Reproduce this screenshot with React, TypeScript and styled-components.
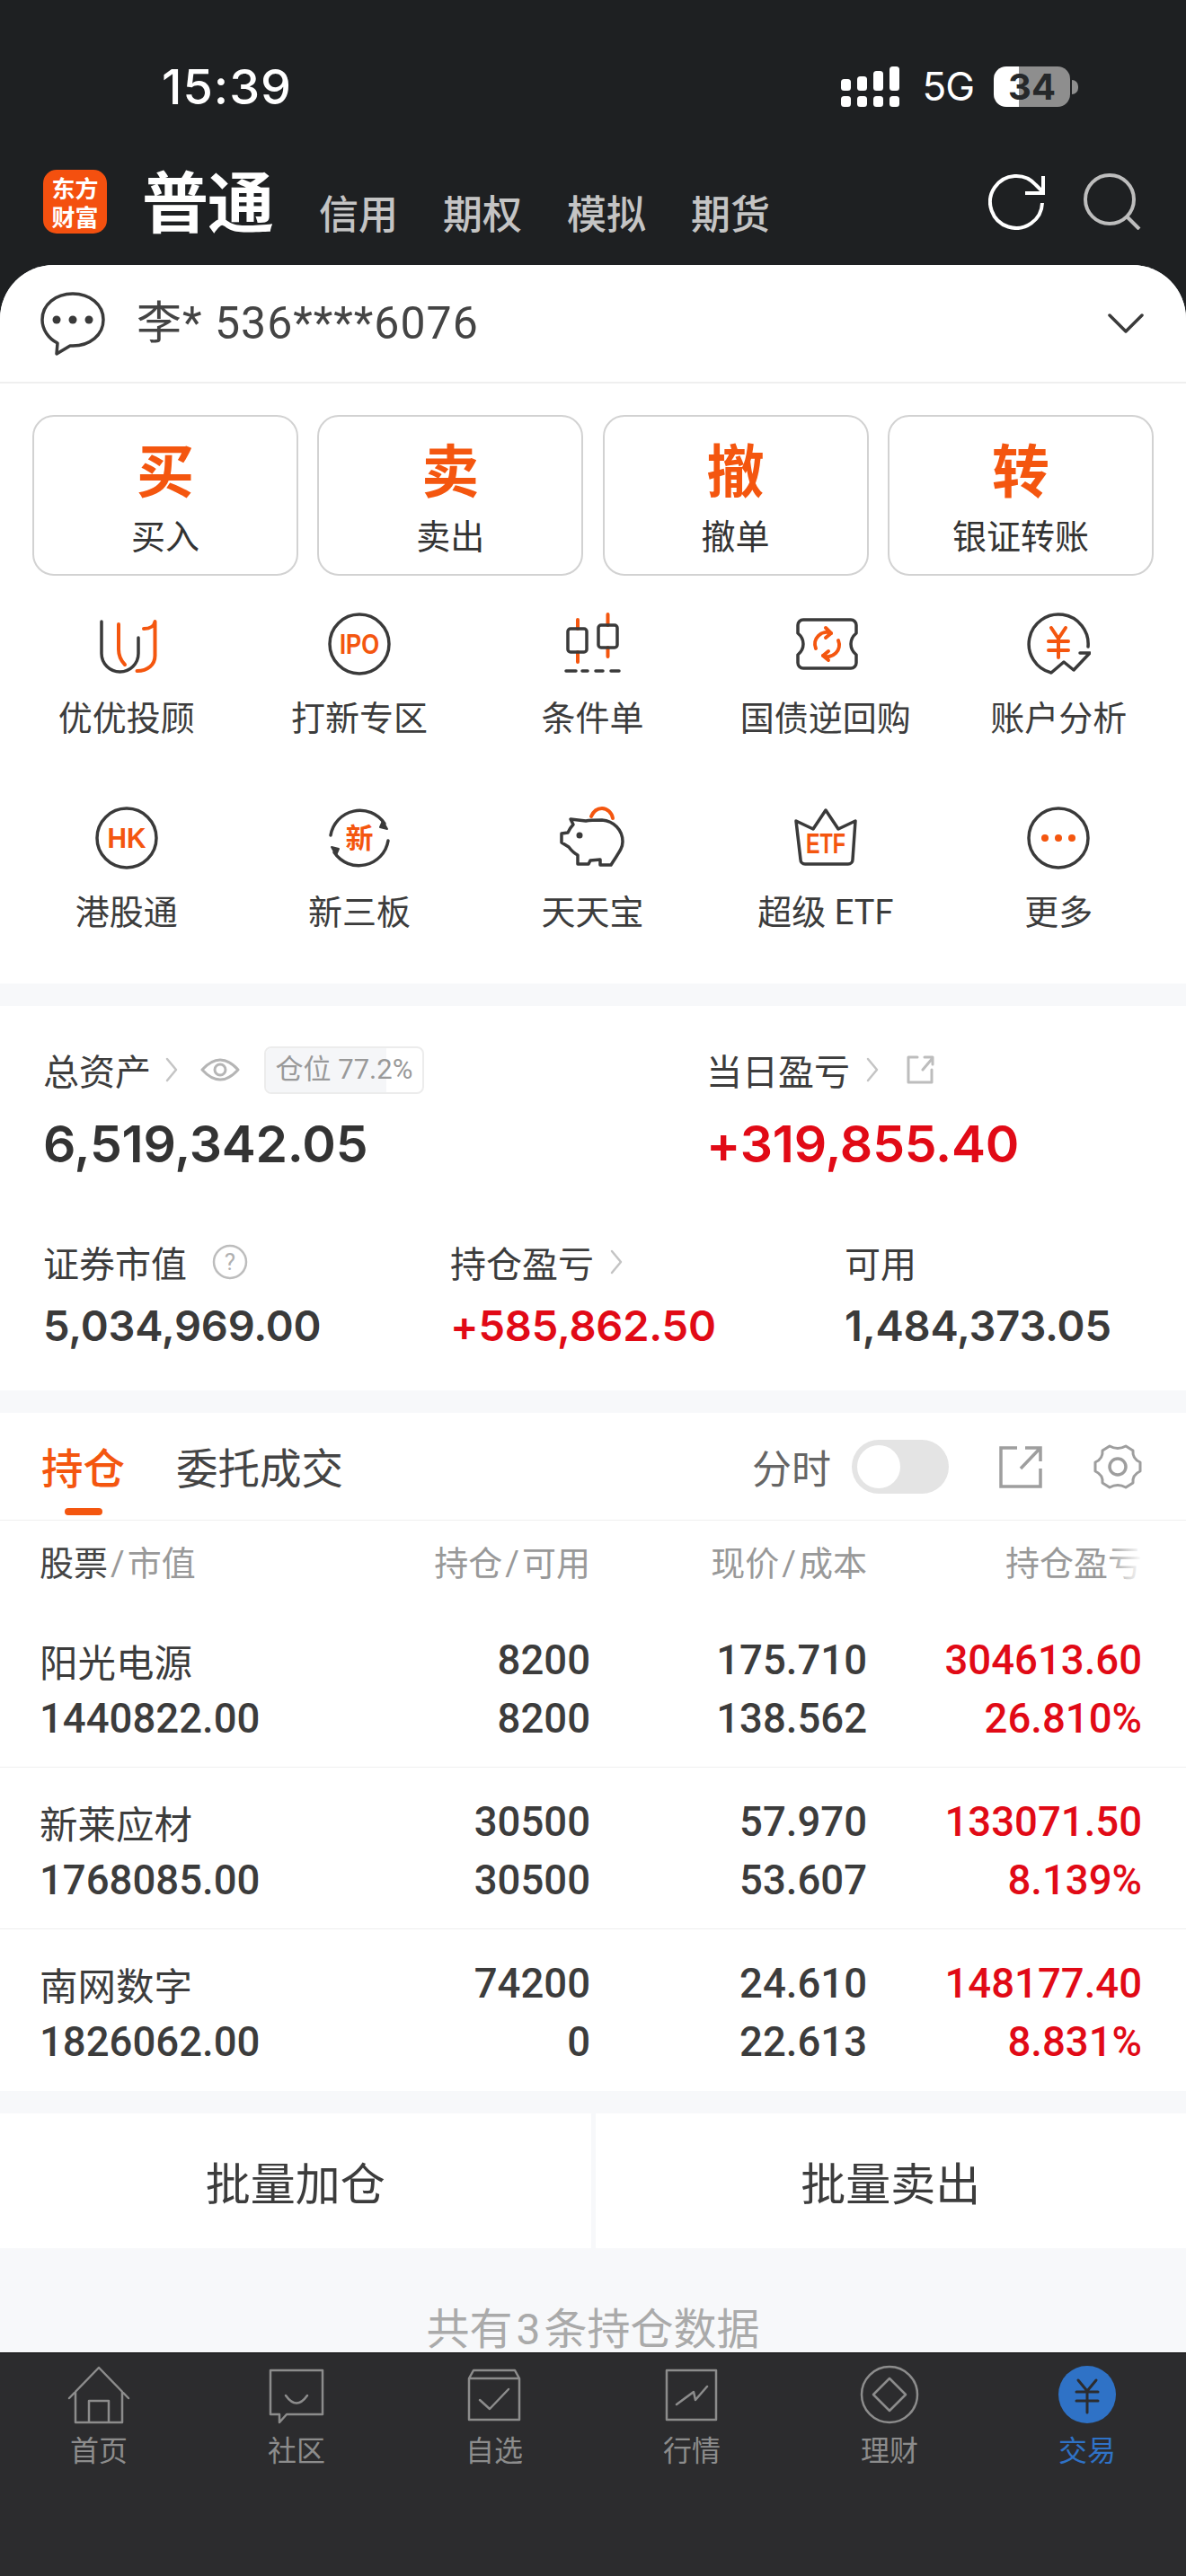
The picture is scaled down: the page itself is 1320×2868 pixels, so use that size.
import React from "react";
import styled, { createGlobalStyle } from "styled-components";

const CJK = `Roboto, "Noto Sans CJK SC", sans-serif`;
const ORANGE = "#f4560f";
const DARK = "#3a3a3a";
const RED = "#e10a16";

const Global = createGlobalStyle`
  html, body { margin: 0; padding: 0; background: #1e2022; }
  * { box-sizing: border-box; }
`;

const Page = styled.div`
  width: 1320px; height: 2868px; display: flex; flex-direction: column;
  background: #1e2022; overflow: hidden; font-family: ${CJK}; color: #444;
`;
const Top = styled.header`height: 295px; flex: none; display: flex; flex-direction: column;`;
const StatusBar = styled.div`
  height: 189px; padding: 74px 120px 0 180px; display: flex; justify-content: space-between; align-items: flex-start; color: #fff;
`;
const Time = styled.div`font: 500 54px/46px Inter, Roboto, sans-serif; letter-spacing: 1px;`;
const StatusRight = styled.div`display: flex; align-items: center; height: 45px;`;
const FiveG = styled.span`font: 400 44px/45px Inter, Roboto, sans-serif; margin: 0 22px 0 24px; letter-spacing: -1px;`;
const Battery = styled.div`
  width: 85px; height: 45px; border-radius: 14px; background: linear-gradient(90deg, #fff 33%, #8e8e8e 33%);
  text-align: center; font: 700 40px/45px Inter, Roboto, sans-serif; color: #26282a;
`;
const BatteryNub = styled.div`width: 7px; height: 16px; border-radius: 0 8px 8px 0; background: #8e8e8e; margin-left: 2px;`;

const Nav = styled.nav`height: 106px; display: flex; align-items: flex-start; padding-left: 48px;`;
const Logo = styled.div`
  width: 71px; height: 71px; border-radius: 15px; background: #f4500f; color: #fff; flex: none;
  display: flex; align-items: center; justify-content: center; text-align: center;
  font: 700 26px/32px "Noto Sans CJK SC", sans-serif;
`;
const MainTab = styled.div`
  margin-left: 39px; width: 197px; font: 700 74px/74px "Noto Sans CJK SC", sans-serif; color: #fff; letter-spacing: -1px; margin-top: -5px;
`;
const SubTab = styled.div`
  width: 138px; font: 500 44px/44px "Noto Sans CJK SC", sans-serif; color: #c4c4c4; margin-top: 25px;
`;
const NavRight = styled.div`margin-left: auto; display: flex; gap: 42px; padding-right: 50px; margin-top: 3px;`;

const Content = styled.main`
  flex: 1; min-height: 0; overflow: hidden; background: #f7f8fa; border-radius: 60px 60px 0 0;
`;
const Account = styled.div`
  height: 132px; background: #fff; border-bottom: 2px solid #efefef; display: flex; align-items: center; padding: 0 46px 0 45px;
`;
const AccountText = styled.div`margin-left: 35px; font: 400 50px/60px Roboto, "Noto Sans CJK SC", sans-serif; color: #444; letter-spacing: 1px; flex: 1;`;

const Shortcuts = styled.section`background: #fff; padding: 35px 11px 54px; margin-bottom: 25px;`;
const Actions = styled.div`display: grid; grid-template-columns: repeat(4, 296px); gap: 21.3px; padding: 0 25px; margin-bottom: 40px;`;
const ActionButton = styled.div`
  height: 179px; border: 2px solid #d2d2d2; border-radius: 24px; display: flex; flex-direction: column; align-items: center;
  padding-top: 16px;
`;
const ActionBig = styled.div`font: 700 64px/80px "Noto Sans CJK SC", sans-serif; color: ${ORANGE};`;
const ActionLabel = styled.div`font: 400 38px/50px "Noto Sans CJK SC", sans-serif; color: #333; margin-top: 10px;`;
const Grid = styled.div`display: grid; grid-template-columns: repeat(5, 259.4px); row-gap: 72px;`;
const GridItem = styled.div`display: flex; flex-direction: column; align-items: center;`;
const GridLabel = styled.div`font: 400 38px/50px Roboto, "Noto Sans CJK SC", sans-serif; color: #3c3c3c; margin-top: 22px;`;
const Ico = styled.svg`display: block; flex: none;`;

const Stats = styled.section`background: #fff; padding: 46px 0 44px 48px; margin-bottom: 25px;`;
const StatRow = styled.div<{ $cols: string; $gap: number }>`
  display: grid; grid-template-columns: ${(p) => p.$cols}; margin-bottom: ${(p) => p.$gap}px;
`;
const StatLabel = styled.div`height: 50px; display: flex; align-items: center; font: 400 40px/50px "Noto Sans CJK SC", sans-serif; color: #3c3c3c;`;
const Gap = styled.span<{ $w: number }>`width: ${(p) => p.$w}px; flex: none;`;
const BigValue = styled.div<{ $red?: boolean }>`
  margin-top: 23px; font: 600 57px/70px Inter, Roboto, sans-serif; letter-spacing: -0.2px; color: ${(p) => (p.$red ? RED : "#333")};
`;
const SmallValue = styled.div<{ $red?: boolean }>`
  margin-top: 18px; font: 600 47px/56px Inter, Roboto, sans-serif; letter-spacing: -0.2px; color: ${(p) => (p.$red ? RED : "#3a3a3a")};
`;
const Badge = styled.div`
  position: relative; width: 178px; height: 53px; border: 2px solid #ececec; border-radius: 8px; margin-left: 27px; overflow: hidden;
  display: flex; align-items: center; justify-content: center; font: 400 31px/50px Roboto, "Noto Sans CJK SC", sans-serif; color: #999; white-space: nowrap;
`;
const BadgeFill = styled.div`position: absolute; left: 0; top: 0; bottom: 0; background: #f5f6f8;`;
const BadgeText = styled.span`position: relative;`;

const Holdings = styled.section`background: #fff; margin-bottom: 25px;`;
const TabsRow = styled.div`height: 120px; border-bottom: 1px solid #efefef; display: flex; align-items: center; padding-left: 46px;`;
const HoldTab = styled.div<{ $active?: boolean }>`
  position: relative; margin-right: 57px; font: ${(p) => (p.$active ? 500 : 400)} 46.5px/60px "Noto Sans CJK SC", sans-serif;
  color: ${(p) => (p.$active ? ORANGE : "#444")}; margin-top: -2px;
`;
const Underline = styled.div`position: absolute; left: 26px; bottom: -25px; width: 42px; height: 8px; border-radius: 4px; background: ${ORANGE};`;
const TabsRight = styled.div`margin-left: auto; display: flex; align-items: center; padding-right: 48px;`;
const Fenshi = styled.span`font: 400 44px/50px "Noto Sans CJK SC", sans-serif; color: #666; margin-right: 23px;`;
const Toggle = styled.div`width: 108px; height: 60px; border-radius: 30px; background: #e4e4e4; padding: 6px; margin-right: 56px;`;
const Knob = styled.div`width: 48px; height: 48px; border-radius: 50%; background: #fff;`;

const COLS = "244px 369px 308px 306px";
const HeadRow = styled.div`
  position: relative; height: 95px; display: grid; grid-template-columns: ${COLS}; padding: 0 0 5px 44px; align-items: center;
  font: 400 38px/50px "Noto Sans CJK SC", sans-serif; color: #999;
`;
const HeadCell = styled.div<{ $right?: boolean }>`text-align: ${(p) => (p.$right ? "right" : "left")}; white-space: nowrap;`;
const HeadStrong = styled.span`color: #444;`;
const Slash = styled.span`font-family: Roboto, sans-serif; line-height: 1; margin: 0 3px;`;
const Fade = styled.div`position: absolute; left: 1232px; top: 18px; width: 46px; height: 60px; background: linear-gradient(90deg, rgba(255,255,255,0), #fff 85%);`;
const Row = styled.div`
  height: 180px; display: grid; grid-template-columns: ${COLS}; padding: 28px 0 0 44px; grid-auto-rows: 65px; align-items: center;
  &:not(:last-child) { border-bottom: 1px solid #efefef; }
`;
const Name = styled.div`font: 400 42.5px/64px "Noto Sans CJK SC", sans-serif; color: #3c3c3c; white-space: nowrap;`;
const Num = styled.div<{ $red?: boolean; $left?: boolean }>`
  font: 500 45.5px/64px Roboto, sans-serif; white-space: nowrap; text-align: ${(p) => (p.$left ? "left" : "right")};
  color: ${(p) => (p.$red ? RED : "#3c3c3c")};
`;

const Bulk = styled.div`display: flex; gap: 5px; height: 150px; margin-bottom: 61px;`;
const BulkButton = styled.div`
  flex: 1; background: #fff; display: flex; align-items: center; justify-content: center; font: 400 50px/60px "Noto Sans CJK SC", sans-serif; color: #3c3c3c;
`;
const Footnote = styled.div`text-align: center; font: 400 48px/60px Roboto, "Noto Sans CJK SC", sans-serif; color: #aaa; word-spacing: -8px;`;

const TabBar = styled.footer`
  height: 249px; flex: none; background: #2c2c2e; border-top: 1px solid #111; display: grid; grid-template-columns: repeat(6, 220px); padding-top: 10px; align-items: start;
`;
const TabItem = styled.div<{ $active?: boolean }>`
  display: flex; flex-direction: column; align-items: center; color: ${(p) => (p.$active ? "#2f72c6" : "#8c8c8c")};
`;
const TabLabel = styled.div`font: 400 32px/40px "Noto Sans CJK SC", sans-serif; margin-top: 4px;`;

const Svg: React.FC<{ s?: number; w?: number; h?: number; children: React.ReactNode }> = ({ s = 72, w, h, children }) => (
  <Ico width={w ?? s} height={h ?? s} viewBox={`0 0 ${w ?? s} ${h ?? s}`} fill="none" strokeLinecap="round" strokeLinejoin="round">
    {children}
  </Ico>
);
const d = { stroke: DARK, strokeWidth: 3.5 };
const o = { stroke: ORANGE, strokeWidth: 4 };
const Label: React.FC<{ y: number; len: number; size: number; x?: number; children: string }> = ({ y, len, size, x = 36, children }) => (
  <text x={x} y={y} textAnchor="middle" fill={ORANGE} fontFamily="'Liberation Sans', 'Noto Sans CJK SC', sans-serif" fontWeight="700" fontSize={size} textLength={len} lengthAdjust="spacingAndGlyphs">
    {children}
  </text>
);

const gridIcons = [
  <Svg key="u">
    <path d="M8 11V46.5a20.5 20.5 0 0 0 41 0V29" {...d} />
    <path d="M27 14V42q0 10 7 17" {...o} />
    <path d="M55 19q11 0 12.5-8V49c0 10-8 17-20 17" {...o} />
  </Svg>,
  <Svg key="ipo">
    <circle cx="36" cy="36" r="33" {...d} />
    <Label y="47" len="44" size="32">IPO</Label>
  </Svg>,
  <Svg key="cond">
    <path d="M20 9V19M20 45V56M53.5 3V15M53.5 40V50" {...o} />
    <rect x="9" y="19" width="21" height="26" rx="3" {...d} />
    <rect x="43" y="15" width="21" height="25" rx="3" {...d} />
    <path d="M7 66H18M25 66H31M40 66H48M57 66H66" {...d} />
  </Svg>,
  <Svg key="bond">
    <path d="M11 9H64a6 6 0 0 1 6 6V24q-6 5-6 12t6 12V57a6 6 0 0 1-6 6H11a6 6 0 0 1-6-6V48q6-5 6-12T5 24V15a6 6 0 0 1 6-6Z" {...d} />
    <path d="M25 41a13 13 0 0 1 17-17M50 32a13 13 0 0 1-17 17" {...o} />
    <path d="M36 18l6 6-6 5M39 54l-6-5 6-5" {...o} />
  </Svg>,
  <Svg key="acct">
    <path d="M69 39A33 33 0 1 0 28 68L42 56 53 65 71 46H60" {...d} />
    <path d="M28 18L36 30 44 18M25 33H47M25 43H47M36 30V51" {...o} />
  </Svg>,
  <Svg key="hk">
    <circle cx="36" cy="36" r="33" {...d} />
    <Label y="47" len="43" size="31">HK</Label>
  </Svg>,
  <Svg key="xin">
    <path d="M4 33A33 33 0 0 1 64 20M68 39A33 33 0 0 1 8 52" {...d} />
    <path d="M62 17l5 9-8-2zM10 55L5 46l8 2z" fill={DARK} stroke={DARK} strokeWidth="2" />
    <text x="36" y="47" textAnchor="middle" fill={ORANGE} fontFamily="'Noto Sans CJK SC', sans-serif" fontWeight="700" fontSize="31">新</text>
  </Svg>,
  <Svg key="pig">
    <path d="M12 15L29 17C34 16 40 16 47 16C60 17 70 27 70 40C70 48 65 53 57 66H45V60L34 61 32 65H20V55C16 53 13 50 10 46L2 41V31L9 30C11 26 13 23 15 21Z" {...d} />
    <circle cx="22" cy="33" r="3.5" fill={DARK} />
    <path d="M35 12C38 5 43 3 47 3C53 3 58 8 59 14" stroke={ORANGE} strokeWidth="4" />
  </Svg>,
  <Svg key="etf">
    <path d="M3 17L22 26 36 5 50 26 69 17 66 60a5 5 0 0 1-5 5H13a5 5 0 0 1-5-5Z" {...d} />
    <Label y="53" len="44" size="31">ETF</Label>
  </Svg>,
  <Svg key="more">
    <circle cx="36" cy="36" r="33" {...d} />
    <circle cx="21" cy="36" r="4" fill={ORANGE} />
    <circle cx="36" cy="36" r="4" fill={ORANGE} />
    <circle cx="51" cy="36" r="4" fill={ORANGE} />
  </Svg>,
];
const gridLabels = ["优优投顾", "打新专区", "条件单", "国债逆回购", "账户分析", "港股通", "新三板", "天天宝", "超级 ETF", "更多"];

const chev = (
  <Svg w={16} h={30}>
    <path d="M3 3L13 15 3 27" stroke="#c4c4c4" strokeWidth="2.5" />
  </Svg>
);
const shareSmall = (
  <Svg w={34} h={36}>
    <path d="M14 4H4V32H30V18M20 18L31 5M22 4H31V12" stroke="#bdbdbd" strokeWidth="3" />
  </Svg>
);

const rows = [
  ["阳光电源", "1440822.00", "8200", "8200", "175.710", "138.562", "304613.60", "26.810%"],
  ["新莱应材", "1768085.00", "30500", "30500", "57.970", "53.607", "133071.50", "8.139%"],
  ["南网数字", "1826062.00", "74200", "0", "24.610", "22.613", "148177.40", "8.831%"],
];

const g = { stroke: "currentColor", strokeWidth: 2.5 };
const tabs = [
  { t: "首页", i: <path d="M3 40L36 6l33 34M10 33V67H62V33M25 67V43H47V67" {...g} /> },
  { t: "社区", i: <path d="M7 9H65V58H25L17 67V58H7ZM24 37q12 17 24 0" {...g} /> },
  { t: "自选", i: <path d="M8 18L13 9H59L64 18V64H8ZM8 18H64M20 42L31 52 52 30" {...g} /> },
  { t: "行情", i: <path d="M8 9H63V64H8ZM19 47L38 33 40 42 53 27" {...g} /> },
  { t: "理财", i: <><circle cx="36" cy="36" r="31" {...g} /><path d="M36 18L54 36 36 54 18 36Z" {...g} /></> },
  { t: "交易", active: true, i: <><circle cx="36" cy="36" r="32" fill="#2f72c6" /><path d="M26 20L36 32 46 20M24 33H48M24 43H48M36 32V56" stroke="#2c2c2e" strokeWidth="3" /></> },
];

export default function App() {
  return (
    <Page>
      <Global />
      <Top>
        <StatusBar>
          <Time>15:39</Time>
          <StatusRight>
            <Svg w={66} h={45}>
              <g fill="#fff">
                <rect x="0" y="14" width="11" height="13" rx="3.5" />
                <rect x="18" y="11" width="11" height="16" rx="3.5" />
                <rect x="36" y="5" width="11" height="22" rx="3.5" />
                <rect x="54" y="0" width="11" height="27" rx="3.5" />
                <rect x="0" y="33" width="11" height="12" rx="3.5" />
                <rect x="18" y="33" width="11" height="12" rx="3.5" />
                <rect x="36" y="33" width="11" height="12" rx="3.5" />
                <rect x="54" y="33" width="11" height="12" rx="3.5" />
              </g>
            </Svg>
            <FiveG>5G</FiveG>
            <Battery>34</Battery>
            <BatteryNub />
          </StatusRight>
        </StatusBar>
        <Nav>
          <Logo>东方<br />财富</Logo>
          <MainTab>普通</MainTab>
          <SubTab>信用</SubTab>
          <SubTab>期权</SubTab>
          <SubTab>模拟</SubTab>
          <SubTab>期货</SubTab>
          <NavRight>
            <Svg w={64} h={64}>
              <path d="M60 34A29 29 0 1 1 53 14L60 21" stroke="#fff" strokeWidth="4" strokeLinecap="butt" />
              <path d="M61 4V23H41" stroke="#fff" strokeWidth="4" strokeLinecap="butt" strokeLinejoin="miter" />
            </Svg>
            <Svg w={64} h={64}>
              <circle cx="29" cy="30" r="27" stroke="#bdbdbd" strokeWidth="4" />
              <path d="M49 50L62 63" stroke="#bdbdbd" strokeWidth="4" strokeLinecap="butt" />
            </Svg>
          </NavRight>
        </Nav>
      </Top>
      <Content>
        <Account>
          <Svg>
            <path d="M36 3C17 3 2 15 2 32c0 11 7 21 17 26l-1 12 15-9h3c19 0 34-12 34-29S55 3 36 3Z" stroke={DARK} strokeWidth="3.5" />
            <circle cx="18" cy="32" r="4.5" fill={DARK} />
            <circle cx="36" cy="32" r="4.5" fill={DARK} />
            <circle cx="54" cy="32" r="4.5" fill={DARK} />
          </Svg>
          <AccountText>李* 536****6076</AccountText>
          <Svg w={42} h={26}>
            <path d="M3 4L21 22 39 4" stroke={DARK} strokeWidth="3.5" />
          </Svg>
        </Account>
        <Shortcuts>
          <Actions>
            {[["买", "买入"], ["卖", "卖出"], ["撤", "撤单"], ["转", "银证转账"]].map(([b, l]) => (
              <ActionButton key={b}>
                <ActionBig>{b}</ActionBig>
                <ActionLabel>{l}</ActionLabel>
              </ActionButton>
            ))}
          </Actions>
          <Grid>
            {gridLabels.map((l, i) => (
              <GridItem key={l}>
                {gridIcons[i]}
                <GridLabel>{l}</GridLabel>
              </GridItem>
            ))}
          </Grid>
        </Shortcuts>
        <Stats>
          <StatRow $cols="738px 1fr" $gap={71}>
            <div>
              <StatLabel>
                总资产
                <Gap $w={15} />
                {chev}
                <Gap $w={24} />
                <Svg w={44} h={30}>
                  <path d="M2 15Q22-7 42 15 22 37 2 15Z" stroke="#b5b5b5" strokeWidth="3" />
                  <circle cx="22" cy="15" r="6" stroke="#b5b5b5" strokeWidth="3" />
                </Svg>
                <Badge>
                  <BadgeFill style={{ width: "77.2%" }} />
                  <BadgeText>仓位 77.2%</BadgeText>
                </Badge>
              </StatLabel>
              <BigValue>6,519,342.05</BigValue>
            </div>
            <div>
              <StatLabel>
                当日盈亏
                <Gap $w={17} />
                {chev}
                <Gap $w={28} />
                {shareSmall}
              </StatLabel>
              <BigValue $red>+319,855.40</BigValue>
            </div>
          </StatRow>
          <StatRow $cols="453px 439px 1fr" $gap={0}>
            <div>
              <StatLabel>
                证券市值
                <Gap $w={28} />
                <Svg w={40} h={40}>
                  <circle cx="20" cy="20" r="18" stroke="#bdbdbd" strokeWidth="2.5" />
                  <text x="20" y="29" textAnchor="middle" fill="#b0b0b0" fontSize="26" fontFamily="Roboto, sans-serif">?</text>
                </Svg>
              </StatLabel>
              <SmallValue>5,034,969.00</SmallValue>
            </div>
            <div>
              <StatLabel>
                持仓盈亏
                <Gap $w={17} />
                {chev}
              </StatLabel>
              <SmallValue $red>+585,862.50</SmallValue>
            </div>
            <div>
              <StatLabel>可用</StatLabel>
              <SmallValue>1,484,373.05</SmallValue>
            </div>
          </StatRow>
        </Stats>
        <Holdings>
          <TabsRow>
            <HoldTab $active>持仓<Underline /></HoldTab>
            <HoldTab>委托成交</HoldTab>
            <TabsRight>
              <Fenshi>分时</Fenshi>
              <Toggle><Knob /></Toggle>
              <Svg w={48} h={48}>
                <path d="M20 3H2V46H46V26M24 26L46 3M29 3H46V18" stroke="#9e9e9e" strokeWidth="3.5" strokeLinecap="butt" strokeLinejoin="miter" />
              </Svg>
              <Gap $w={56} />
              <Svg w={56} h={56}>
                <path d="M19 5q9 5 18 0l8 5q-1 9 8 13v10q-9 4-8 13l-8 5q-9-5-18 0l-8-5q1-9-8-13V23q9-4 8-13Z" stroke="#9e9e9e" strokeWidth="3" />
                <circle cx="28" cy="28" r="9" stroke="#9e9e9e" strokeWidth="3.5" />
              </Svg>
            </TabsRight>
          </TabsRow>
          <HeadRow>
            <HeadCell><HeadStrong>股票</HeadStrong><Slash>/</Slash>市值</HeadCell>
            <HeadCell $right>持仓<Slash>/</Slash>可用</HeadCell>
            <HeadCell $right>现价<Slash>/</Slash>成本</HeadCell>
            <HeadCell $right>持仓盈亏</HeadCell>
            <Fade />
          </HeadRow>
          {rows.map((r) => (
            <Row key={r[0]}>
              <Name>{r[0]}</Name>
              <Num>{r[2]}</Num>
              <Num>{r[4]}</Num>
              <Num $red>{r[6]}</Num>
              <Num $left>{r[1]}</Num>
              <Num>{r[3]}</Num>
              <Num>{r[5]}</Num>
              <Num $red>{r[7]}</Num>
            </Row>
          ))}
        </Holdings>
        <Bulk>
          <BulkButton>批量加仓</BulkButton>
          <BulkButton>批量卖出</BulkButton>
        </Bulk>
        <Footnote>共有 3 条持仓数据</Footnote>
      </Content>
      <TabBar>
        {tabs.map((t) => (
          <TabItem key={t.t} $active={t.active}>
            <Svg>{t.i}</Svg>
            <TabLabel>{t.t}</TabLabel>
          </TabItem>
        ))}
      </TabBar>
    </Page>
  );
}
